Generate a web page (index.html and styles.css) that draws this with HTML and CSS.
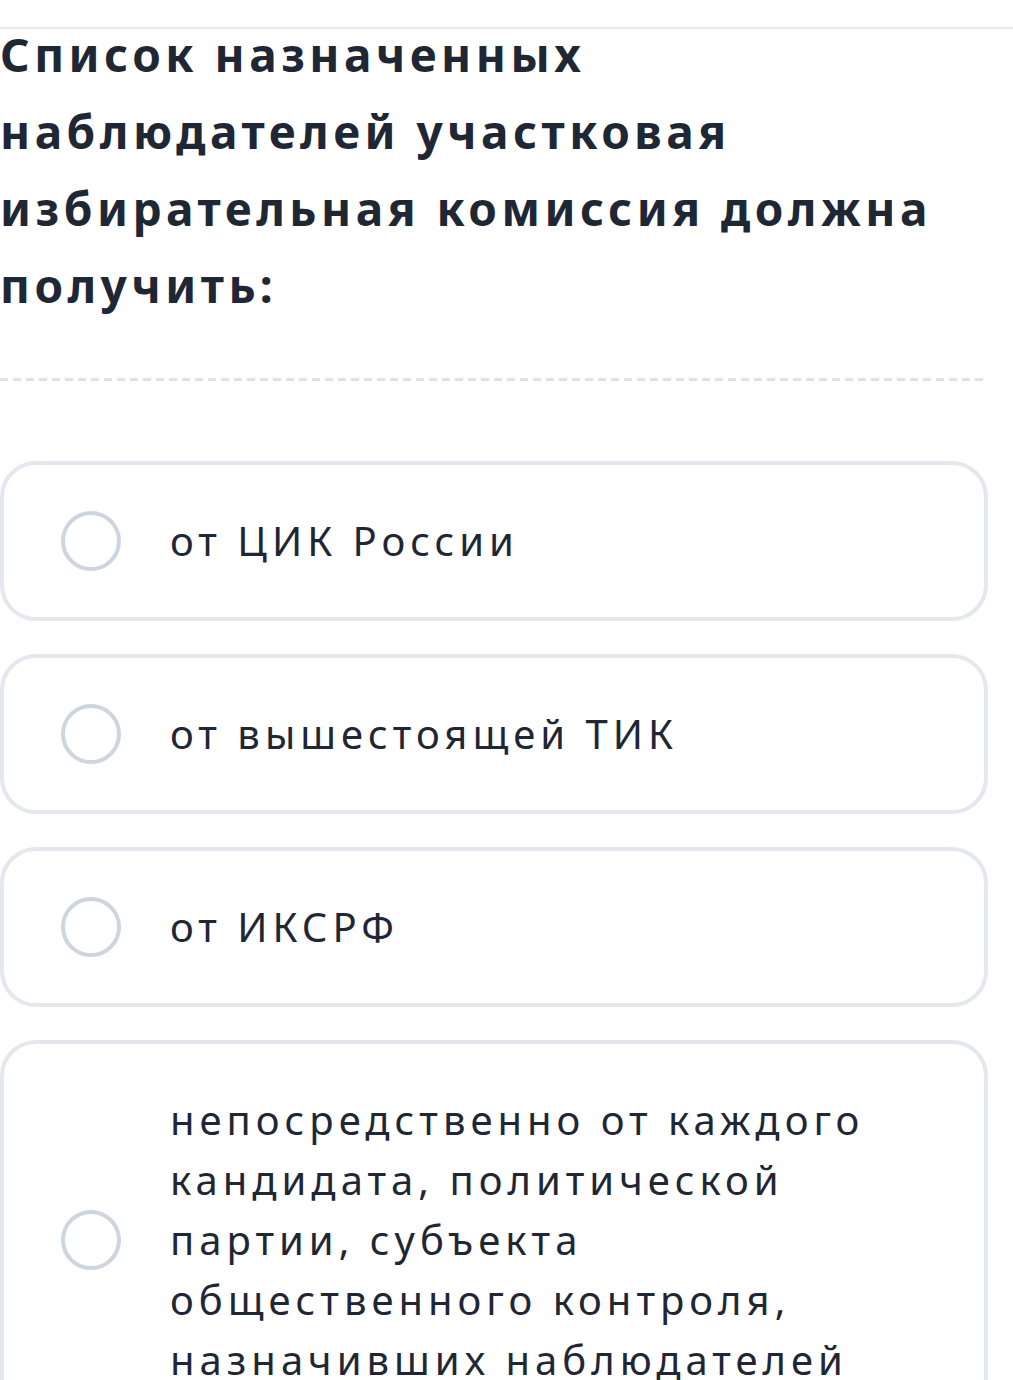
FILE: index.html
```html
<!DOCTYPE html>
<html lang="ru">
<head>
<meta charset="utf-8">
<title>Вопрос</title>
<link rel="stylesheet" href="styles.css">
</head>
<body>
<header class="topbar"></header>
<main class="question">
  <h1 class="question-title">Список назначенных наблюдателей участковая избирательная комиссия должна получить:</h1>
  <div class="divider"></div>
  <ul class="options">
    <li class="option"><span class="radio"></span><span class="option-text">от ЦИК России</span></li>
    <li class="option"><span class="radio"></span><span class="option-text">от вышестоящей ТИК</span></li>
    <li class="option"><span class="radio"></span><span class="option-text">от ИКСРФ</span></li>
    <li class="option"><span class="radio"></span><span class="option-text">непосредственно от каждого<br>кандидата, политической<br>партии, субъекта<br>общественного контроля,<br>назначивших наблюдателей</span></li>
  </ul>
</main>
</body>
</html>
```

FILE: styles.css
```css
html, body {
  margin: 0;
  padding: 0;
  background: #ffffff;
}

body {
  font-family: "Noto Sans", "Open Sans", sans-serif;
  color: #1f2735;
}

/* fixed header strip with its bottom rule */
.topbar {
  position: fixed;
  top: 0;
  left: 0;
  right: 0;
  height: 27px;
  background: #ffffff;
  border-bottom: 2px solid #e8e9ec;
  z-index: 2;
}

.question {
  padding: 16px 25px 0 0;
}

.question-title {
  margin: 0;
  font-size: 46px;
  line-height: 77px;
  font-weight: 700;
  letter-spacing: 4.5px;
  color: #1f2735;
}

.divider {
  height: 3px;
  margin-top: 54px;
  background: repeating-linear-gradient(to right, #dde1e8 0 8px, transparent 8px 13px);
}

.options {
  list-style: none;
  margin: 80px 0 0;
  padding: 0;
  display: flex;
  flex-direction: column;
  gap: 33px;
}

.option {
  display: flex;
  align-items: center;
  gap: 49px;
  padding: 46px 40px 46px 57px;
  border: 4px solid #e3e7ee;
  border-radius: 36px;
}

.radio {
  flex: none;
  width: 52px;
  height: 52px;
  border: 4px solid #cfd5de;
  border-radius: 50%;
}

.option-text {
  font-size: 40px;
  line-height: 60px;
  letter-spacing: 5px;
  color: #1f2735;
}
```
